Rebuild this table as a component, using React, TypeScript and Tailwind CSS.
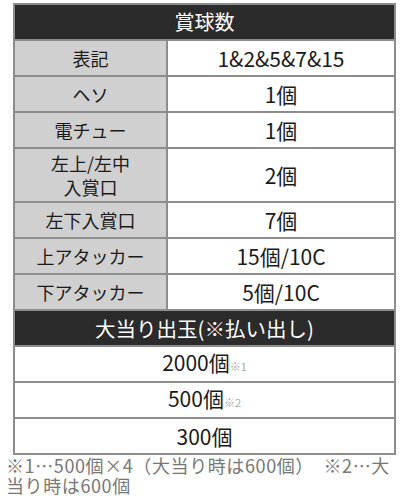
export default function App() {
  const rows: [React.ReactNode, string][] = [
    ['表記', '1&2&5&7&15'],
    ['ヘソ', '1個'],
    ['電チュー', '1個'],
    [
      <>
        左上/左中
        <br />
        入賞口
      </>,
      '2個',
    ],
    ['左下入賞口', '7個'],
    ['上アタッカー', '15個/10C'],
    ['下アタッカー', '5個/10C'],
  ]

  return (
    <div
      className="bg-white pt-[3px] pl-[6px] pr-[4px] text-[#1a1a1a]"
      style={{ fontFamily: '"Noto Sans CJK JP", "Noto Sans", sans-serif' }}
    >
      <table className="ml-[7px] w-[383px] border-collapse table-fixed text-center">
        <colgroup>
          <col className="w-[153px]" />
          <col />
        </colgroup>
        <tbody>
          <tr className="h-[36px]">
            <th colSpan={2} className="border-2 border-[#8c8c8c] bg-[#2b2b2b] text-[20px] font-normal text-white">
              賞球数
            </th>
          </tr>
          {rows.map(([label, value], i) => (
            <tr key={i} className={i === 3 ? 'h-[54px]' : 'h-[36px]'}>
              <td className="border-2 border-[#8c8c8c] bg-[#d0d0d0] text-[18px] leading-[24px]">{label}</td>
              <td className="border-2 border-[#8c8c8c] bg-white text-[21px] leading-[26px]">{value}</td>
            </tr>
          ))}
          <tr className="h-[36px]">
            <th colSpan={2} className="border-2 border-[#8c8c8c] bg-[#2b2b2b] text-[20.5px] font-normal text-white">
              大当り出玉(※払い出し)
            </th>
          </tr>
          <tr className="h-[36px]">
            <td colSpan={2} className="border-2 border-[#8c8c8c] text-[21px] leading-[26px]">
              2000個<span className="text-[11px] text-[#aaa]">※1</span>
            </td>
          </tr>
          <tr className="h-[36px]">
            <td colSpan={2} className="border-2 border-[#8c8c8c] text-[21px] leading-[26px]">
              500個<span className="text-[11px] text-[#aaa]">※2</span>
            </td>
          </tr>
          <tr className="h-[36px]">
            <td colSpan={2} className="border-2 border-[#8c8c8c] text-[21px] leading-[26px]">
              300個
            </td>
          </tr>
        </tbody>
      </table>
      <p className="text-[18px] leading-[20px] tracking-[0.6px] text-[#777]">
        ※1…500個×4（大当り時は600個）　※2…大当り時は600個
      </p>
    </div>
  )
}
